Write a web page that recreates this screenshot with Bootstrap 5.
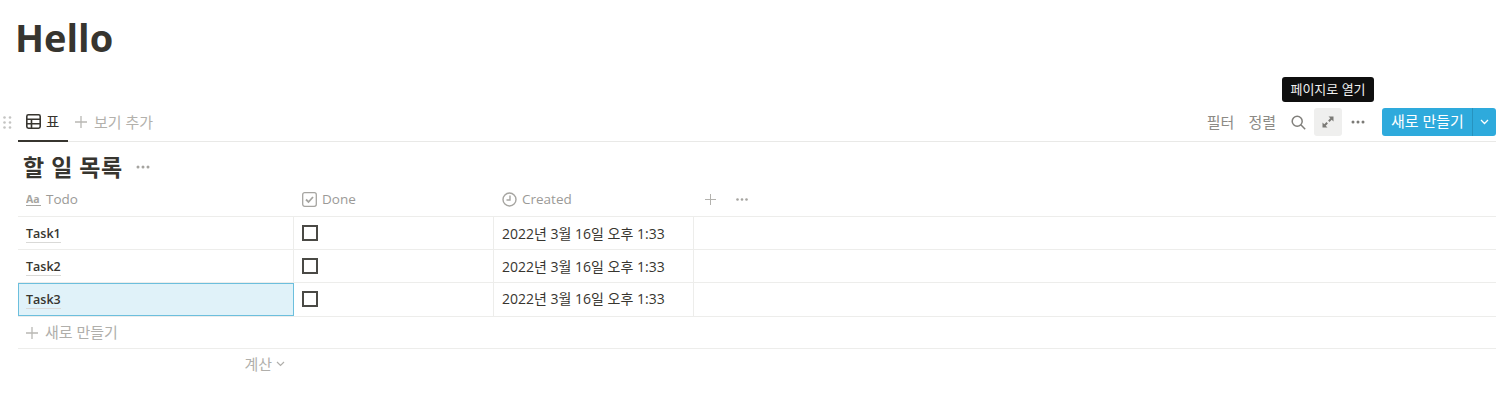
<!DOCTYPE html>
<html lang="ko">
<head>
    <meta charset="UTF-8">
    <meta name="viewport" content="width=device-width, initial-scale=1.0">
    <title>Hello</title>
    <link rel="stylesheet" href="https://cdn.jsdelivr.net/npm/bootstrap@5.3.0/dist/css/bootstrap.min.css">
    <style>
        body {
            font-family: "Open Sans", "Noto Sans CJK KR", sans-serif;
            color: #37352f;
            background: #fff;
            overflow: hidden;
            font-size: 14px;
        }
        .page-wrap { padding: 13px 7px 0 18px; position: relative; height: 403px; }
        .page-title {
            font-size: 38px; font-weight: 700; line-height: 48px;
            margin: 0 0 0 -3px; height: 92px; color: #37352f;
        }
        .view-bar { height: 37px; border-bottom: 1px solid #e9e9e7; position: relative; }
        .drag-dots { position: absolute; left: -15px; top: 11px; }
        .view-tab {
            height: 37px; width: 50px; padding: 0 0 2px 8px; gap: 5px;
            border-bottom: 2px solid #37352f; font-size: 14.5px; margin-bottom: -1px;
        }
        .view-add { color: #b3b1ac; font-size: 15px; gap: 7px; margin-left: 7px; padding-bottom: 2px; }
        .view-tools { color: #8c8a85; font-size: 15px; padding-bottom: 2px; gap: 2px; }
        .tool-text { margin-right: 12px; }
        .tool-text-last { margin-right: 6px; }
        .tool-box { width: 28px; height: 28px; border-radius: 3px; }
        .tool-box.is-hover { background: #efefee; }
        .btn-new {
            background: #2eaadc; color: #fff; height: 28px; border-radius: 3px;
            font-size: 15px; margin-left: 8px; overflow: hidden;
        }
        .btn-new-main { padding: 0 8px 0 9px; border-right: 1px solid #2793bf; height: 28px; line-height: 27px; width: 91px; white-space: nowrap; }
        .btn-new-arrow { width: 23px; height: 28px; }
        .tip-box {
            position: absolute; left: 1282px; top: 77px; width: 92px; height: 25px;
            background: #0f0f0f; color: #f1f1f1; font-size: 13px; border-radius: 3px;
        }
        .db-title { font-size: 23px; font-weight: 700; height: 40px; padding-left: 5px; gap: 13px; padding-top: 10px; letter-spacing: .5px; }
        .grid-row { display: flex; border-bottom: 1px solid #ededeb; }
        .grid-head { height: 35px; color: #9b9a97; font-size: 13.5px; }
        .grid-body { height: 33px; font-size: 14px; }
        .c-name { width: 276px; flex: none; padding-left: 8px; border-right: 1px solid #ededeb; }
        .c-done { width: 200px; flex: none; padding-left: 8px; border-right: 1px solid #ededeb; }
        .c-date { width: 200px; flex: none; padding-left: 8px; border-right: 1px solid #ededeb; }
        .grid-head .c-name, .grid-head .c-done, .grid-head .c-date { gap: 5px; border-right: 0; }
        .head-tools { padding-left: 11px; gap: 20px; }
        .task-name { font-weight: 600; font-size: 12.5px; line-height: 16px; border-bottom: 1px solid #d9d9d7; color: #37352f; margin-top: 2px; }
        .check-box { width: 16px; height: 16px; border: 2px solid #4a4945; }
        .row-picked { height: 34px; }
        .row-picked .c-name { background: #e0f2f9; box-shadow: inset 0 0 0 1px #6cbfdd; border-right: 0; padding-right: 1px; }
        .row-picked .c-done, .row-picked .c-date { padding-bottom: 2px; }
        .add-row { height: 32px; color: #b0afab; padding-left: 8px; gap: 7px; font-size: 15px; border-bottom: 1px solid #ededeb; }
        .calc-row { width: 276px; height: 30px; color: #b0afab; font-size: 15px; gap: 4px; padding-right: 9px; }
    </style>
</head>
<body>
<div class="page-wrap">
    <h1 class="page-title">Hello</h1>

    <!-- View bar -->
    <div class="view-bar d-flex align-items-center">
        <svg class="drag-dots" width="9" height="13" viewBox="0 0 9 13" fill="#c4c4c2">
            <circle cx="1.5" cy="1.5" r="1.3"/><circle cx="7" cy="1.5" r="1.3"/>
            <circle cx="1.5" cy="6.5" r="1.3"/><circle cx="7" cy="6.5" r="1.3"/>
            <circle cx="1.5" cy="11.5" r="1.3"/><circle cx="7" cy="11.5" r="1.3"/>
        </svg>
        <div class="view-tab d-flex align-items-center">
            <svg width="15" height="15" viewBox="0 0 15 15" fill="none" stroke="#37352f" stroke-width="1.6">
                <rect x=".8" y=".8" width="13.4" height="13.4" rx="1.6"/>
                <path d="M.8 5.2h13.4M.8 9.8h13.4M5.5 5.2v9"/>
            </svg>
            <span>표</span>
        </div>
        <div class="view-add d-flex align-items-center">
            <svg width="12" height="12" viewBox="0 0 12 12" stroke="#b9b8b4" stroke-width="1.3"><path d="M6 0v12M0 6h12"/></svg>
            <span>보기 추가</span>
        </div>
        <div class="view-tools d-flex align-items-center ms-auto">
            <span class="tool-text">필터</span>
            <span class="tool-text-last">정렬</span>
            <span class="tool-box d-flex align-items-center justify-content-center">
                <svg width="15" height="15" viewBox="0 0 15 15" fill="none" stroke="#807f7b" stroke-width="1.5"><circle cx="6.2" cy="6.2" r="5"/><path d="M9.8 9.8l4.4 4.4"/></svg>
            </span>
            <span class="tool-box is-hover d-flex align-items-center justify-content-center">
                <svg width="12" height="12" viewBox="0 0 12 12" fill="#7b7a76"><path d="M6.5.5h5v5L9.7 3.7 7.5 5.9 6.1 4.5 8.3 2.3zM5.5 11.5h-5v-5l1.8 1.8 2.2-2.2 1.4 1.4-2.2 2.2z"/></svg>
            </span>
            <span class="tool-box d-flex align-items-center justify-content-center">
                <svg width="14" height="4" viewBox="0 0 14 4" fill="#7b7a76"><circle cx="2" cy="2" r="1.5"/><circle cx="7" cy="2" r="1.5"/><circle cx="12" cy="2" r="1.5"/></svg>
            </span>
            <div class="btn-new d-flex align-items-center">
                <span class="btn-new-main">새로 만들기</span>
                <span class="btn-new-arrow d-flex align-items-center justify-content-center">
                    <svg width="9" height="6" viewBox="0 0 9 6" fill="none" stroke="#fff" stroke-width="1.3"><path d="M1 1l3.5 3.5L8 1"/></svg>
                </span>
            </div>
        </div>
    </div>

    <div class="tip-box d-flex align-items-center justify-content-center">페이지로 열기</div>

    <!-- Database -->
    <div class="db-title d-flex align-items-center">
        <span>할 일 목록</span>
        <svg width="14" height="4" viewBox="0 0 14 4" fill="#a5a4a0"><circle cx="2" cy="2" r="1.5"/><circle cx="7" cy="2" r="1.5"/><circle cx="12" cy="2" r="1.5"/></svg>
    </div>

    <div class="grid-row grid-head">
        <div class="c-name d-flex align-items-center">
            <svg width="15" height="13" viewBox="0 0 15 13"><text x="0" y="10" font-size="10.5" font-weight="700" fill="#a6a5a1" font-family="Open Sans">Aa</text><path d="M0 12.5h15" stroke="#a6a5a1"/></svg>
            <span>Todo</span>
        </div>
        <div class="c-done d-flex align-items-center">
            <svg width="15" height="15" viewBox="0 0 15 15" fill="none" stroke="#a6a5a1" stroke-width="1.3"><rect x=".7" y=".7" width="13.6" height="13.6" rx="2"/><path d="M4 7.5l2.5 2.5L11 5" stroke-width="1.8"/></svg>
            <span>Done</span>
        </div>
        <div class="c-date d-flex align-items-center">
            <svg width="15" height="15" viewBox="0 0 15 15" fill="none" stroke="#a6a5a1"><circle cx="7.5" cy="7.5" r="6.5" stroke-width="1.4"/><path d="M8 3.5v4.5H4.5" stroke-width="1.4"/></svg>
            <span>Created</span>
        </div>
        <div class="d-flex align-items-center head-tools">
            <svg width="11" height="11" viewBox="0 0 11 11" stroke="#b3b2ae"><path d="M5.5 0v11M0 5.5h11"/></svg>
            <svg width="12" height="3" viewBox="0 0 12 3" fill="#a5a4a0"><circle cx="1.5" cy="1.5" r="1.3"/><circle cx="6" cy="1.5" r="1.3"/><circle cx="10.5" cy="1.5" r="1.3"/></svg>
        </div>
    </div>

    <div class="grid-row grid-body">
        <div class="c-name d-flex align-items-center"><span class="task-name">Task1</span></div>
        <div class="c-done d-flex align-items-center"><span class="check-box"></span></div>
        <div class="c-date d-flex align-items-center">2022년 3월 16일 오후 1:33</div>
    </div>
    <div class="grid-row grid-body">
        <div class="c-name d-flex align-items-center"><span class="task-name">Task2</span></div>
        <div class="c-done d-flex align-items-center"><span class="check-box"></span></div>
        <div class="c-date d-flex align-items-center">2022년 3월 16일 오후 1:33</div>
    </div>
    <div class="grid-row grid-body row-picked">
        <div class="c-name d-flex align-items-center"><span class="task-name">Task3</span></div>
        <div class="c-done d-flex align-items-center"><span class="check-box"></span></div>
        <div class="c-date d-flex align-items-center">2022년 3월 16일 오후 1:33</div>
    </div>

    <div class="add-row d-flex align-items-center">
        <svg width="12" height="12" viewBox="0 0 12 12" stroke="#b9b8b4" stroke-width="1.3"><path d="M6 0v12M0 6h12"/></svg>
        <span>새로 만들기</span>
    </div>
    <div class="calc-row d-flex align-items-center justify-content-end">
        <span>계산</span>
        <svg width="9" height="6" viewBox="0 0 9 6" fill="none" stroke="#b0afab" stroke-width="1.2"><path d="M1 1l3.5 3.5L8 1"/></svg>
    </div>
</div>
<script src="https://cdn.jsdelivr.net/npm/bootstrap@5.3.0/dist/js/bootstrap.bundle.min.js"></script>
</body>
</html>
